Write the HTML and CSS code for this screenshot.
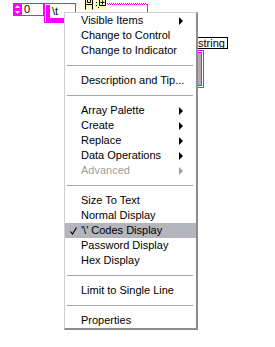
FILE: index.html
```html
<!DOCTYPE html>
<html lang="en">
<head>
    <meta charset="UTF-8">
    <title>String control menu</title>
    <link rel="stylesheet" href="styles.css">
</head>
<body>

<!-- block diagram canvas -->
<div class="diagram">
    <div class="num">
        <span class="incdec">
            <svg width="5" height="9" viewBox="0 0 5 9"><path d="M2.5 0 L5 3 L0 3 Z M0 6 L5 6 L2.5 9 Z" fill="#fff"/></svg>
        </span>
        <span class="num-field">0</span>
    </div>

    <div class="str">
        <div class="str-frame">
            <span class="str-field">\t</span>
        </div>
    </div>

    <div class="func">
        <svg width="23" height="11" viewBox="0 0 23 11">
            <path d="M1.5 0 V5.5 H8.5 V0 M3.5 0 V3.5 H6.5 V0 M1.5 5.5 V10.5 M8.5 5.5 V10.5" stroke="#000" fill="none"/>
            <rect x="12" y="3" width="1" height="1" fill="#000"/>
            <rect x="12" y="6" width="1" height="1" fill="#000"/>
            <rect x="14" y="8" width="1" height="1" fill="#000"/>
            <path d="M15.5 0.5 H21.5 V6.5 H15.5 Z M18.5 1.5 V5.5 M16.5 3.5 H20.5" stroke="#000" fill="none"/>
        </svg>
    </div>

    <svg class="wire" width="42" height="12" viewBox="0 0 42 12">
        <path d="M0 3.5 H40" stroke="#f0f" stroke-dasharray="1 1"/>
        <path d="M1 4.5 H41" stroke="#f0f" stroke-dasharray="1 1"/>
        <path d="M40.5 4 V12" stroke="#f0f"/>
    </svg>

    <div class="label">string</div>

    <div class="indicator">
        <div class="indicator-inner"></div>
    </div>
</div>

<!-- context menu -->
<div class="menu">
    <div class="item sub">Visible Items</div>
    <div class="item">Change to Control</div>
    <div class="item">Change to Indicator</div>
    <div class="sep"></div>
    <div class="item">Description and Tip...</div>
    <div class="sep"></div>
    <div class="item sub">Array Palette</div>
    <div class="item sub">Create</div>
    <div class="item sub">Replace</div>
    <div class="item sub">Data Operations</div>
    <div class="item sub disabled">Advanced</div>
    <div class="sep"></div>
    <div class="item">Size To Text</div>
    <div class="item">Normal Display</div>
    <div class="item checked">
        <svg class="check" width="7" height="8" viewBox="0 0 7 8"><path d="M0.5 4.5 L2.5 7 L6.5 0.5" stroke="#000" stroke-width="1.2" fill="none"/></svg>
        '\' Codes Display
    </div>
    <div class="item">Password Display</div>
    <div class="item">Hex Display</div>
    <div class="sep"></div>
    <div class="item">Limit to Single Line</div>
    <div class="sep"></div>
    <div class="item">Properties</div>
</div>

</body>
</html>
```

FILE: styles.css
```css
:root {
    --wire: #ff00ff;
    --menu-hl: #b5b5bd;
    --menu-off: #a0a0a0;
}

body {
    margin: 0;
    background: #fff;
    font-family: 'Liberation Sans', Arial, sans-serif;
    font-size: 11px;
    color: #000;
}

.diagram {
    position: relative;
    width: 275px;
    height: 347px;
    overflow: hidden;
}

/* numeric control */
.num {
    position: absolute;
    left: 13px;
    top: 3px;
    width: 31px;
    height: 13px;
    box-sizing: border-box;
    background: var(--wire);
    padding: 1px;
    display: flex;
    gap: 1px;
}

.incdec {
    width: 7px;
    display: flex;
    align-items: center;
    justify-content: center;
}

.num-field {
    flex: 1;
    background: #fff;
    line-height: 11px;
    padding-left: 2px;
}

/* string control */
.str {
    position: absolute;
    left: 44px;
    top: 3px;
    width: 32px;
    height: 20px;
    box-sizing: border-box;
    border: 1px solid var(--wire);
    padding: 1px 0 0 1px;
}

.str-frame {
    height: 100%;
    box-sizing: border-box;
    background: var(--wire);
    padding: 0 0 4px 4px;
    display: flex;
}

.str-field {
    flex: 1;
    background: #fff;
    line-height: 13px;
    padding-left: 2px;
}

/* function node + wire */
.func {
    position: absolute;
    left: 84px;
    top: -1px;
    width: 23px;
    height: 11px;
    background: #fdf8c8;
}

.func svg, .wire, .check {
    display: block;
}

.wire {
    position: absolute;
    left: 107px;
    top: 0;
}

.label {
    position: absolute;
    left: 194px;
    top: 37px;
    height: 10px;
    border: 1px solid #000;
    padding: 0 2px 0 3px;
    line-height: 11px;
    background: #fff;
}

.indicator {
    position: absolute;
    left: 186px;
    top: 50px;
    width: 18px;
    height: 38px;
    box-sizing: border-box;
    border: 1px solid var(--wire);
    padding: 1px;
}

.indicator-inner {
    height: 100%;
    box-sizing: border-box;
    border: 1px solid var(--wire);
    background: #b4aab4;
}

/* context menu */
.menu {
    position: absolute;
    left: 64px;
    top: 12px;
    width: 131px;
    background: #fff;
    border-style: solid;
    border-width: 1px 2px 2px 1px;
    border-color: #cfcfcf #8c8c8c #8c8c8c #cfcfcf;
    z-index: 2;
}

.item {
    position: relative;
    height: 15px;
    line-height: 15px;
    padding-left: 16px;
    white-space: nowrap;
}

.item.sub::after {
    content: "";
    position: absolute;
    right: 13px;
    top: 4px;
    border-left: 4px solid #000;
    border-top: 4px solid transparent;
    border-bottom: 4px solid transparent;
}

.item.disabled {
    color: var(--menu-off);
}

.item.disabled::after {
    border-left-color: var(--menu-off);
}

.item.checked {
    background: var(--menu-hl);
}

.check {
    position: absolute;
    left: 5px;
    top: 4px;
}

.sep {
    height: 15px;
    padding: 0 3px 0 2px;
    display: flex;
    align-items: center;
}

.sep::before {
    content: "";
    flex: 1;
    height: 1px;
    background: #a6a6a6;
}
```
